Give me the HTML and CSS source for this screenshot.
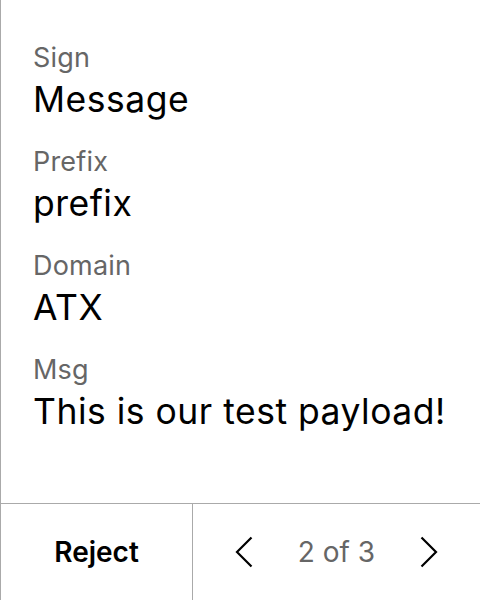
FILE: index.html
```html
<!DOCTYPE html>
<html>
<head>
<meta charset="utf-8">
<link rel="stylesheet" href="styles.css">
</head>
<body>
<div class="screen">
  <div class="content">
    <div class="field">
      <div class="label">Sign</div>
      <div class="value">Message</div>
    </div>
    <div class="field">
      <div class="label">Prefix</div>
      <div class="value">prefix</div>
    </div>
    <div class="field">
      <div class="label">Domain</div>
      <div class="value">ATX</div>
    </div>
    <div class="field">
      <div class="label">Msg</div>
      <div class="value">This is our test payload!</div>
    </div>
  </div>
  <div class="footer">
    <div class="reject">Reject</div>
    <div class="pager">
      <svg class="chev" width="18" height="32" viewBox="0 0 18 32"><path d="M16.5 1.5 L2 16 L16.5 30.5" fill="none" stroke="#000" stroke-width="2.2"/></svg>
      <span class="count">2 of 3</span>
      <svg class="chev" width="18" height="32" viewBox="0 0 18 32"><path d="M1.5 1.5 L16 16 L1.5 30.5" fill="none" stroke="#000" stroke-width="2.2"/></svg>
    </div>
  </div>
</div>
</body>
</html>
```

FILE: styles.css
```css
html, body {
  margin: 0;
  padding: 0;
  background: #fff;
}
body {
  font-family: Inter, "Noto Sans", sans-serif;
  color: #000;
}
.screen {
  width: 480px;
  height: 600px;
  box-sizing: border-box;
  border-left: 1px solid #aaa;
  display: flex;
  flex-direction: column;
}
.content {
  flex: 1;
  padding: 42px 16px 0 32px;
  display: flex;
  flex-direction: column;
  gap: 24px;
}
.field {
  display: flex;
  flex-direction: column;
}
.label {
  font-size: 27px;
  line-height: 32px;
  color: #666;
  letter-spacing: 0.2px;
}
.value {
  margin-top: 3px;
  font-size: 35.5px;
  line-height: 45px;
  letter-spacing: 0.5px;
  white-space: nowrap;
}
.footer {
  height: 96px;
  border-top: 1px solid #aaa;
  display: flex;
}
.reject {
  width: 191px;
  border-right: 1px solid #aaa;
  display: flex;
  align-items: center;
  justify-content: center;
  font-size: 28px;
  font-weight: 600;
}
.pager {
  flex: 1;
  display: flex;
  align-items: center;
  justify-content: space-between;
  padding: 0 42px;
}
.count {
  font-size: 28px;
  color: #666;
}
```
